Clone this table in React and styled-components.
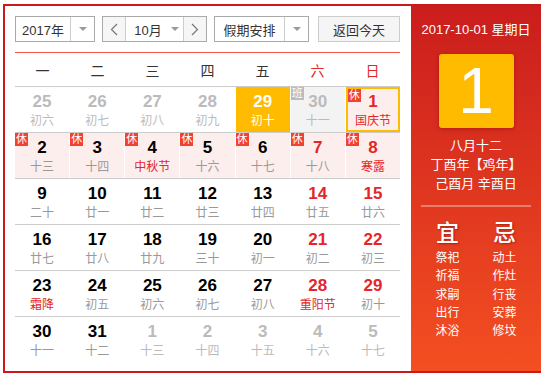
import React from "react";
import styled, { createGlobalStyle } from "styled-components";

const GlobalStyle = createGlobalStyle`
  body {
    margin: 0;
    background: #fff;
    font-family: "Liberation Sans", "Noto Sans CJK SC", sans-serif;
  }
`;

const weekdays = ["一", "二", "三", "四", "五", "六", "日"];

// o: other month, h: holiday(休), w: workday(班), f: festival, t: today, s: selected
const weeks = [
  [
    { d: 25, l: "初六", o: 1 },
    { d: 26, l: "初七", o: 1 },
    { d: 27, l: "初八", o: 1 },
    { d: 28, l: "初九", o: 1 },
    { d: 29, l: "初十", t: 1 },
    { d: 30, l: "十一", o: 1, w: 1 },
    { d: 1, l: "国庆节", h: 1, f: 1, s: 1 },
  ],
  [
    { d: 2, l: "十三", h: 1 },
    { d: 3, l: "十四", h: 1 },
    { d: 4, l: "中秋节", h: 1, f: 1 },
    { d: 5, l: "十六", h: 1 },
    { d: 6, l: "十七", h: 1 },
    { d: 7, l: "十八", h: 1 },
    { d: 8, l: "寒露", h: 1, f: 1 },
  ],
  [
    { d: 9, l: "二十" },
    { d: 10, l: "廿一" },
    { d: 11, l: "廿二" },
    { d: 12, l: "廿三" },
    { d: 13, l: "廿四" },
    { d: 14, l: "廿五" },
    { d: 15, l: "廿六" },
  ],
  [
    { d: 16, l: "廿七" },
    { d: 17, l: "廿八" },
    { d: 18, l: "廿九" },
    { d: 19, l: "三十" },
    { d: 20, l: "初一" },
    { d: 21, l: "初二" },
    { d: 22, l: "初三" },
  ],
  [
    { d: 23, l: "霜降", f: 1 },
    { d: 24, l: "初五" },
    { d: 25, l: "初六" },
    { d: 26, l: "初七" },
    { d: 27, l: "初八" },
    { d: 28, l: "重阳节", f: 1 },
    { d: 29, l: "初十" },
  ],
  [
    { d: 30, l: "十一" },
    { d: 31, l: "十二" },
    { d: 1, l: "十三", o: 1 },
    { d: 2, l: "十四", o: 1 },
    { d: 3, l: "十五", o: 1 },
    { d: 4, l: "十六", o: 1 },
    { d: 5, l: "十七", o: 1 },
  ],
];

const yi = ["祭祀", "祈福", "求嗣", "出行", "沐浴"];
const ji = ["动土", "作灶", "行丧", "安葬", "修坟"];

function Chevron({ dir }) {
  return (
    <svg width="8" height="13" viewBox="0 0 8 13">
      <polyline
        points={dir === "left" ? "7,1 1.5,6.5 7,12" : "1,1 6.5,6.5 1,12"}
        fill="none"
        stroke="#777"
        strokeWidth="1.2"
      />
    </svg>
  );
}

function App() {
  return (
    <>
      <GlobalStyle />
      <Frame>
        <Main>
          <Toolbar>
            <Select $w={80}>
              <SelectText $w={55}>2017年</SelectText>
              <ArrowBox>
                <Caret />
              </ArrowBox>
            </Select>
            <MonthGroup>
              <NavButton>
                <Chevron dir="left" />
              </NavButton>
              <MonthText>
                10月
                <Caret />
              </MonthText>
              <NavButton>
                <Chevron dir="right" />
              </NavButton>
            </MonthGroup>
            <Select $w={95}>
              <SelectText $w={70}>假期安排</SelectText>
              <ArrowBox>
                <Caret />
              </ArrowBox>
            </Select>
            <TodayButton>返回今天</TodayButton>
          </Toolbar>

          <WeekHead>
            {weekdays.map((w, i) => (
              <WeekDay key={w} $red={i >= 5}>
                {w}
              </WeekDay>
            ))}
          </WeekHead>

          {weeks.map((week, r) => (
            <WeekRow key={r} $last={r === weeks.length - 1}>
              {week.map((c, i) => (
                <Cell
                  key={i}
                  $today={c.t}
                  $rest={c.h}
                  $work={c.w}
                  $selected={c.s}
                >
                  {c.h ? <Badge>休</Badge> : null}
                  {c.w ? <Badge $grey>班</Badge> : null}
                  <DayNum $other={c.o} $today={c.t} $weekend={i >= 5 && !c.o}>
                    {c.d}
                  </DayNum>
                  <Lunar $other={c.o} $today={c.t} $fest={c.f}>
                    {c.l}
                  </Lunar>
                </Cell>
              ))}
            </WeekRow>
          ))}
        </Main>

        <Side>
          <SideDate>2017-10-01 星期日</SideDate>
          <BigDay>1</BigDay>
          <LunarInfo>
            <div>八月十二</div>
            <div>丁酉年【鸡年】</div>
            <div>己酉月 辛酉日</div>
          </LunarInfo>
          <Divider />
          <Almanac>
            <AlmanacCol>
              <AlmanacTitle>宜</AlmanacTitle>
              {yi.map((t) => (
                <AlmanacItem key={t}>{t}</AlmanacItem>
              ))}
            </AlmanacCol>
            <AlmanacCol>
              <AlmanacTitle>忌</AlmanacTitle>
              {ji.map((t) => (
                <AlmanacItem key={t}>{t}</AlmanacItem>
              ))}
            </AlmanacCol>
          </Almanac>
        </Side>
      </Frame>
    </>
  );
}

export default App;

const Frame = styled.div`
  margin: 4px 0 0 3px;
  width: 538px;
  height: 369px;
  box-sizing: border-box;
  border: 2px solid #c9191b;
  border-right: none;
  display: flex;
`;

const Main = styled.div`
  width: 406px;
  box-sizing: border-box;
  padding: 10px 11px 0 10px;
`;

const Toolbar = styled.div`
  display: flex;
  align-items: center;
  height: 26px;
  margin-bottom: 10px;
  font-size: 13px;
  color: #333;
`;

const Select = styled.div`
  width: ${(p) => p.$w}px;
  height: 26px;
  box-sizing: border-box;
  border: 1px solid #aaa;
  display: flex;
  margin-right: 7px;
`;

const SelectText = styled.div`
  width: ${(p) => p.$w - 1}px;
  display: flex;
  align-items: center;
  justify-content: center;
  border-right: 1px solid #ccc;
`;

const ArrowBox = styled.div`
  flex: 1;
  display: flex;
  align-items: center;
  justify-content: center;
`;

const Caret = styled.span`
  display: inline-block;
  width: 0;
  height: 0;
  border-left: 4px solid transparent;
  border-right: 4px solid transparent;
  border-top: 4px solid #999;
`;

const MonthGroup = styled.div`
  width: 105px;
  height: 26px;
  box-sizing: border-box;
  border: 1px solid #aaa;
  display: flex;
  margin-right: 7px;
`;

const NavButton = styled.div`
  width: 22px;
  background: #f6f6f6;
  display: flex;
  align-items: center;
  justify-content: center;
`;

const MonthText = styled.div`
  flex: 1;
  border-left: 1px solid #ccc;
  border-right: 1px solid #ccc;
  display: flex;
  align-items: center;
  justify-content: center;
  gap: 9px;
  padding-left: 4px;
`;

const TodayButton = styled.div`
  margin-left: 2px;
  width: 82px;
  height: 26px;
  box-sizing: border-box;
  border: 1px solid #ccc;
  background: #f5f5f5;
  display: flex;
  align-items: center;
  justify-content: center;
`;

const WeekHead = styled.div`
  display: grid;
  grid-template-columns: repeat(7, 1fr);
  height: 33px;
  border-top: 1px solid #f5544a;
  border-bottom: 1px solid #ccc;
`;

const WeekDay = styled.div`
  display: flex;
  align-items: center;
  justify-content: center;
  font-size: 14px;
  color: ${(p) => (p.$red ? "#e3262a" : "#333")};
`;

const WeekRow = styled.div`
  display: grid;
  grid-template-columns: repeat(7, 1fr);
  column-gap: 1px;
  height: 45px;
  border-bottom: ${(p) => (p.$last ? "none" : "1px solid #ccc")};
`;

const Cell = styled.div`
  position: relative;
  box-sizing: border-box;
  display: flex;
  flex-direction: column;
  align-items: center;
  padding-top: ${(p) => (p.$selected ? "3px" : "5px")};
  background: ${(p) =>
    p.$today ? "#ffbb00" : p.$work ? "#f3f3f3" : p.$rest ? "#fdeeee" : "#fff"};
  border: ${(p) => (p.$selected ? "2px solid #ffbb00" : "none")};
`;

const Badge = styled.span`
  position: absolute;
  top: 0;
  left: 0;
  width: 13px;
  height: 13px;
  line-height: 13px;
  font-size: 11px;
  text-align: center;
  color: #fff;
  background: ${(p) => (p.$grey ? "#bbb" : "#f3402f")};
`;

const DayNum = styled.div`
  font-size: 17px;
  font-weight: bold;
  line-height: 20px;
  color: ${(p) =>
    p.$today ? "#fff" : p.$other ? "#bbb" : p.$weekend ? "#e3262a" : "#000"};
`;

const Lunar = styled.div`
  font-size: 12px;
  line-height: 18px;
  color: ${(p) =>
    p.$today ? "#fff" : p.$other ? "#bbb" : p.$fest ? "#e3262a" : "#999"};
`;

const Side = styled.div`
  flex: 1;
  background: linear-gradient(to bottom, #ca1d1d, #f44f22);
  color: #fff;
  display: flex;
  flex-direction: column;
  align-items: center;
  padding-top: 15px;
`;

const SideDate = styled.div`
  font-size: 13px;
  line-height: 18px;
`;

const BigDay = styled.div`
  margin-top: 15px;
  width: 75px;
  height: 74px;
  border-radius: 3px;
  background: #ffbb00;
  box-shadow: 0 1px 4px rgba(120, 0, 0, 0.4);
  display: flex;
  align-items: center;
  justify-content: center;
  font-size: 64px;
  line-height: 1;
`;

const LunarInfo = styled.div`
  margin-top: 8px;
  font-size: 13px;
  line-height: 19px;
  text-align: center;
`;

const Divider = styled.div`
  margin-top: 12px;
  width: 110px;
  height: 2px;
  background: rgba(255, 255, 255, 0.35);
`;

const Almanac = styled.div`
  margin-top: 13px;
  display: grid;
  grid-template-columns: 57px 57px;
`;

const AlmanacCol = styled.div`
  display: flex;
  flex-direction: column;
  align-items: center;
`;

const AlmanacTitle = styled.div`
  font-size: 23px;
  font-weight: 500;
  line-height: 26px;
  margin-bottom: 3px;
  text-shadow: 1px 1px 2px rgba(120, 0, 0, 0.5);
`;

const AlmanacItem = styled.div`
  font-size: 12px;
  line-height: 18.3px;
`;
